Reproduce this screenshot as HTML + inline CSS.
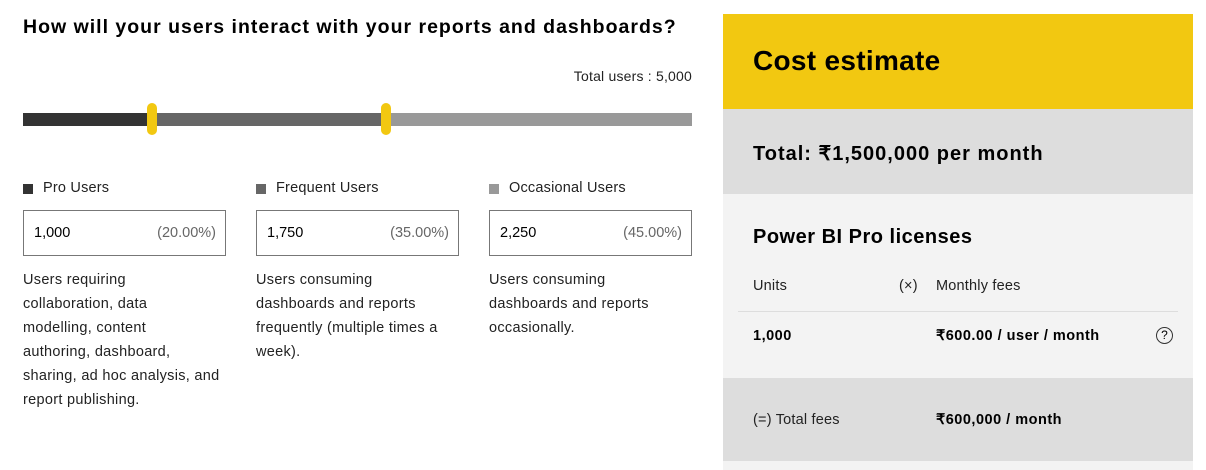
<!DOCTYPE html>
<html><head><style>
*{margin:0;padding:0;box-sizing:border-box}
body{width:1206px;height:470px;background:#fff;font-family:"Liberation Sans",sans-serif;color:#000;position:relative;overflow:hidden}
.a{position:absolute;white-space:nowrap}
h1{position:absolute;left:23px;top:16px;font-size:19.5px;font-weight:bold;letter-spacing:1px;white-space:nowrap}
.lab{font-size:14.5px;color:#222;letter-spacing:0.2px}
.sq{position:absolute;width:10px;height:10px}
.box{position:absolute;top:210px;width:203px;height:46px;border:1px solid #777;font-size:14.5px}
.box .v{position:absolute;left:10px;top:14px}
.box .p{position:absolute;right:9px;top:14px;color:#666}
.desc{position:absolute;top:268px;font-size:14.5px;line-height:24px;color:#222;white-space:nowrap;letter-spacing:0.3px}
.th{position:absolute;width:10px;height:32px;background:#f2c811;border-radius:5px;top:103px}
</style></head><body>
<h1>How will your users interact with your reports and dashboards?</h1>
<div class="a lab" style="right:514px;top:68px;font-size:14px">Total users : 5,000</div>
<div class="a" style="left:23px;top:113px;width:130px;height:13px;background:#333"></div>
<div class="a" style="left:153px;top:113px;width:234px;height:13px;background:#666"></div>
<div class="a" style="left:387px;top:113px;width:305px;height:13px;background:#999"></div>
<div class="th" style="left:147px"></div>
<div class="th" style="left:381px"></div>

<div class="sq" style="left:23px;top:184px;background:#333"></div>
<div class="a lab" style="left:43px;top:180px">Pro Users</div>
<div class="sq" style="left:256px;top:184px;background:#666"></div>
<div class="a lab" style="left:276px;top:180px">Frequent Users</div>
<div class="sq" style="left:489px;top:184px;background:#999"></div>
<div class="a lab" style="left:509px;top:180px">Occasional Users</div>

<div class="box" style="left:23px"><span class="v">1,000</span><span class="p">(20.00%)</span></div>
<div class="box" style="left:256px"><span class="v">1,750</span><span class="p">(35.00%)</span></div>
<div class="box" style="left:489px"><span class="v">2,250</span><span class="p">(45.00%)</span></div>

<div class="desc" style="left:23px">Users requiring<br>collaboration, data<br>modelling, content<br>authoring, dashboard,<br>sharing, ad hoc analysis, and<br>report publishing.</div>
<div class="desc" style="left:256px">Users consuming<br>dashboards and reports<br>frequently (multiple times a<br>week).</div>
<div class="desc" style="left:489px">Users consuming<br>dashboards and reports<br>occasionally.</div>

<div class="a" style="left:723px;top:14px;width:470px;height:95px;background:#f2c811"></div>
<div class="a" style="left:753px;top:45px;font-size:28px;font-weight:bold;letter-spacing:0.3px">Cost estimate</div>
<div class="a" style="left:723px;top:109px;width:470px;height:85px;background:#dddddd"></div>
<div class="a" style="left:753px;top:141px;font-size:20px;font-weight:bold;letter-spacing:1px">Total: ₹1,500,000 per month</div>
<div class="a" style="left:723px;top:194px;width:470px;height:276px;background:#f3f3f3"></div>
<div class="a" style="left:753px;top:226px;font-size:20px;font-weight:bold;letter-spacing:0.5px">Power BI Pro licenses</div>
<div class="a lab" style="left:753px;top:278px">Units</div>
<div class="a lab" style="left:899px;top:278px">(×)</div>
<div class="a lab" style="left:936px;top:278px">Monthly fees</div>
<div class="a" style="left:738px;top:311px;width:440px;height:1px;background:#ddd"></div>
<div class="a" style="left:753px;top:328px;font-size:14.5px;font-weight:bold;letter-spacing:0.5px">1,000</div>
<div class="a" style="left:936px;top:328px;font-size:14.5px;font-weight:bold;letter-spacing:0.5px">₹600.00 / user / month</div>
<div class="a" style="left:1156px;top:327px;width:17px;height:17px;border:1.3px solid #333;border-radius:50%;font-size:12px;text-align:center;line-height:15px">?</div>
<div class="a" style="left:723px;top:378px;width:470px;height:83px;background:#dddddd"></div>
<div class="a lab" style="left:753px;top:412px">(=) Total fees</div>
<div class="a" style="left:936px;top:412px;font-size:14.5px;font-weight:bold;letter-spacing:0.5px">₹600,000 / month</div>
</body></html>
